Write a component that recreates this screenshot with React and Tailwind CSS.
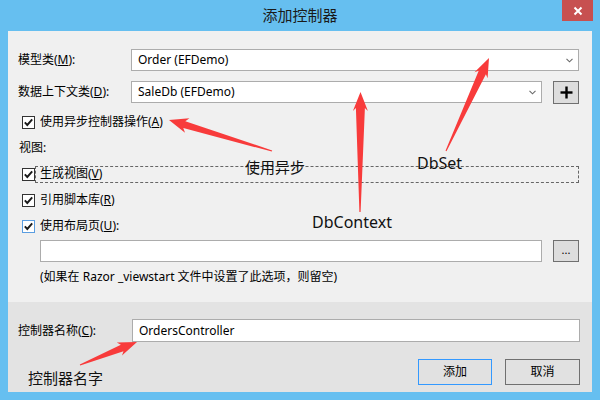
import React from "react";

function arrowPoints(tx, ty, px, py, L, H, w, tw) {
  const dx = px - tx, dy = py - ty;
  const len = Math.hypot(dx, dy);
  const ux = dx / len, uy = dy / len;
  const nx = -uy, ny = ux;
  const bx = px - ux * L, by = py - uy * L;
  const pts = [
    [tx + nx * tw, ty + ny * tw],
    [bx + nx * w, by + ny * w],
    [bx - ux * 3 + nx * H, by - uy * 3 + ny * H],
    [px, py],
    [bx - ux * 3 - nx * H, by - uy * 3 - ny * H],
    [bx - nx * w, by - ny * w],
    [tx - nx * tw, ty - ny * tw],
  ];
  return pts.map((p) => p[0].toFixed(1) + "," + p[1].toFixed(1)).join(" ");
}

function Check({ blue }) {
  return (
    <div
      className={
        "w-[13px] h-[13px] shrink-0 bg-white border flex items-center justify-center " +
        (blue ? "border-[#5a9de0]" : "border-[#333333]")
      }
    >
      <svg width="11" height="11" viewBox="0 0 11 11">
        <path d="M1.8 5.4 L4.3 8 L9.2 2.4" fill="none" stroke="#1a1a1a" strokeWidth="1.9" />
      </svg>
    </div>
  );
}

function Chevron() {
  return (
    <svg width="7" height="5" viewBox="0 0 7 5">
      <path d="M0.5 0.8 L3.5 3.8 L6.5 0.8" fill="none" stroke="#6a6a6a" strokeWidth="1.1" />
    </svg>
  );
}

export default function App() {
  return (
    <div className="relative w-[600px] h-[400px] bg-[#66bff0] flex flex-col overflow-hidden font-['Noto_Sans','Noto_Sans_CJK_SC',sans-serif]">
      {/* title bar */}
      <div className="relative h-[31px] shrink-0 flex items-center justify-center text-[15px] text-[#1a1a1a]">
        添加控制器
        <div className="absolute right-[7px] top-0 w-[31px] h-[21px] bg-[#c75050] flex items-center justify-center">
          <svg width="10" height="10" viewBox="0 0 10 10">
            <path d="M1.5 1.5 L8.5 8.5 M8.5 1.5 L1.5 8.5" stroke="#ffffff" strokeWidth="2" />
          </svg>
        </div>
      </div>

      {/* client */}
      <div className="mx-[8px] mb-[8px] flex-1 flex flex-col bg-[#f0f0f0] text-[12px] text-black">
        <div className="h-[271px] shrink-0 pl-[10px] pr-[13px] pt-[18px] flex flex-col">
          <div className="flex items-center h-[22px]">
            <div className="w-[113px] shrink-0">
              模型类(<span className="underline">M</span>):
            </div>
            <div className="flex-1 h-[22px] border border-[#acacac] bg-white flex items-center justify-between pl-[6px] pr-[5px]">
              <span>Order (EFDemo)</span>
              <Chevron />
            </div>
          </div>

          <div className="flex items-center h-[22px] mt-[10px]">
            <div className="w-[113px] shrink-0">
              数据上下文类(<span className="underline">D</span>):
            </div>
            <div className="flex-1 h-[22px] border border-[#acacac] bg-white flex items-center justify-between pl-[6px] pr-[5px]">
              <span>SaleDb (EFDemo)</span>
              <Chevron />
            </div>
            <div className="ml-[11px] w-[26px] h-[23px] shrink-0 bg-[#dddddd] border border-[#707070] flex items-center justify-center">
              <svg width="13" height="13" viewBox="0 0 13 13">
                <rect x="5.3" y="0.5" width="2.4" height="12" fill="#000" />
                <rect x="0.5" y="5.3" width="12" height="2.4" fill="#000" />
              </svg>
            </div>
          </div>

          <div className="mt-[6px] h-[26px] flex items-center pl-[4px]">
            <Check />
            <span className="ml-[5px]">
              使用异步控制器操作(<span className="underline">A</span>)
            </span>
          </div>
          <div className="h-[26px] flex items-center pl-[1px]">视图:</div>
          <div className="h-[26px] flex items-center pl-[4px]">
            <Check />
            <div className="flex-1 h-[17px] border border-dashed border-[#666666] flex items-center pl-[4px]">
              生成视图(<span className="underline">V</span>)
            </div>
          </div>
          <div className="h-[26px] flex items-center pl-[4px]">
            <Check />
            <span className="ml-[5px]">
              引用脚本库(<span className="underline">R</span>)
            </span>
          </div>
          <div className="h-[26px] flex items-center pl-[4px]">
            <Check blue />
            <span className="ml-[5px]">
              使用布局页(<span className="underline">U</span>):
            </span>
          </div>

          <div className="mt-[1px] pl-[22px] flex h-[22px]">
            <div className="flex-1 border border-[#acacac] bg-white" />
            <div className="ml-[11px] w-[26px] shrink-0 bg-[#dddddd] border border-[#707070] flex items-center justify-center text-[11px] leading-none pb-[3px]">
              ...
            </div>
          </div>
          <div className="mt-[7px] pl-[22px] h-[16px] leading-[16px]">
            (如果在 Razor _viewstart 文件中设置了此选项，则留空)
          </div>
        </div>

        <div className="flex-1 bg-[#e3e3e3] pl-[10px] pr-[12px] pt-[17px] flex flex-col">
          <div className="flex items-center h-[23px]">
            <div className="w-[114px] shrink-0">
              控制器名称(<span className="underline">C</span>):
            </div>
            <div className="flex-1 h-[23px] border border-[#acacac] bg-white flex items-center pl-[6px]">
              OrdersController
            </div>
          </div>
          <div className="mt-[17px] flex justify-end gap-[13px]">
            <div className="w-[74px] h-[26px] border border-[#3399ff] bg-[#e1e1e1] flex items-center justify-center">
              添加
            </div>
            <div className="w-[75px] h-[26px] border border-[#707070] bg-[#e1e1e1] flex items-center justify-center">
              取消
            </div>
          </div>
        </div>
      </div>

      {/* annotations */}
      <div className="absolute inset-0 pointer-events-none">
        <svg className="absolute inset-0" width="600" height="400" viewBox="0 0 600 400">
          <g fill="#f83b3b">
            <polygon points={arrowPoints(272, 151, 169, 120, 16, 7.5, 3.5, 0.6)} />
            <polygon points={arrowPoints(360, 212, 360.5, 92, 16, 7.5, 4.5, 0.6)} />
            <polygon points={arrowPoints(446, 151, 489, 58, 16, 7.2, 4, 0.6)} />
            <polygon points={arrowPoints(80, 365, 137, 342, 16, 7, 3.5, 0.6)} />
          </g>
        </svg>
        <span className="absolute left-[245px] top-[157px] text-[15px] leading-[20px] text-[#111]">使用异步</span>
        <span className="absolute left-[417px] top-[153px] text-[16px] leading-[20px] text-[#111]">DbSet</span>
        <span className="absolute left-[312px] top-[212px] text-[16px] leading-[20px] text-[#111]">DbContext</span>
        <span className="absolute left-[28px] top-[368px] text-[15px] leading-[20px] text-[#111]">控制器名字</span>
      </div>
    </div>
  );
}
